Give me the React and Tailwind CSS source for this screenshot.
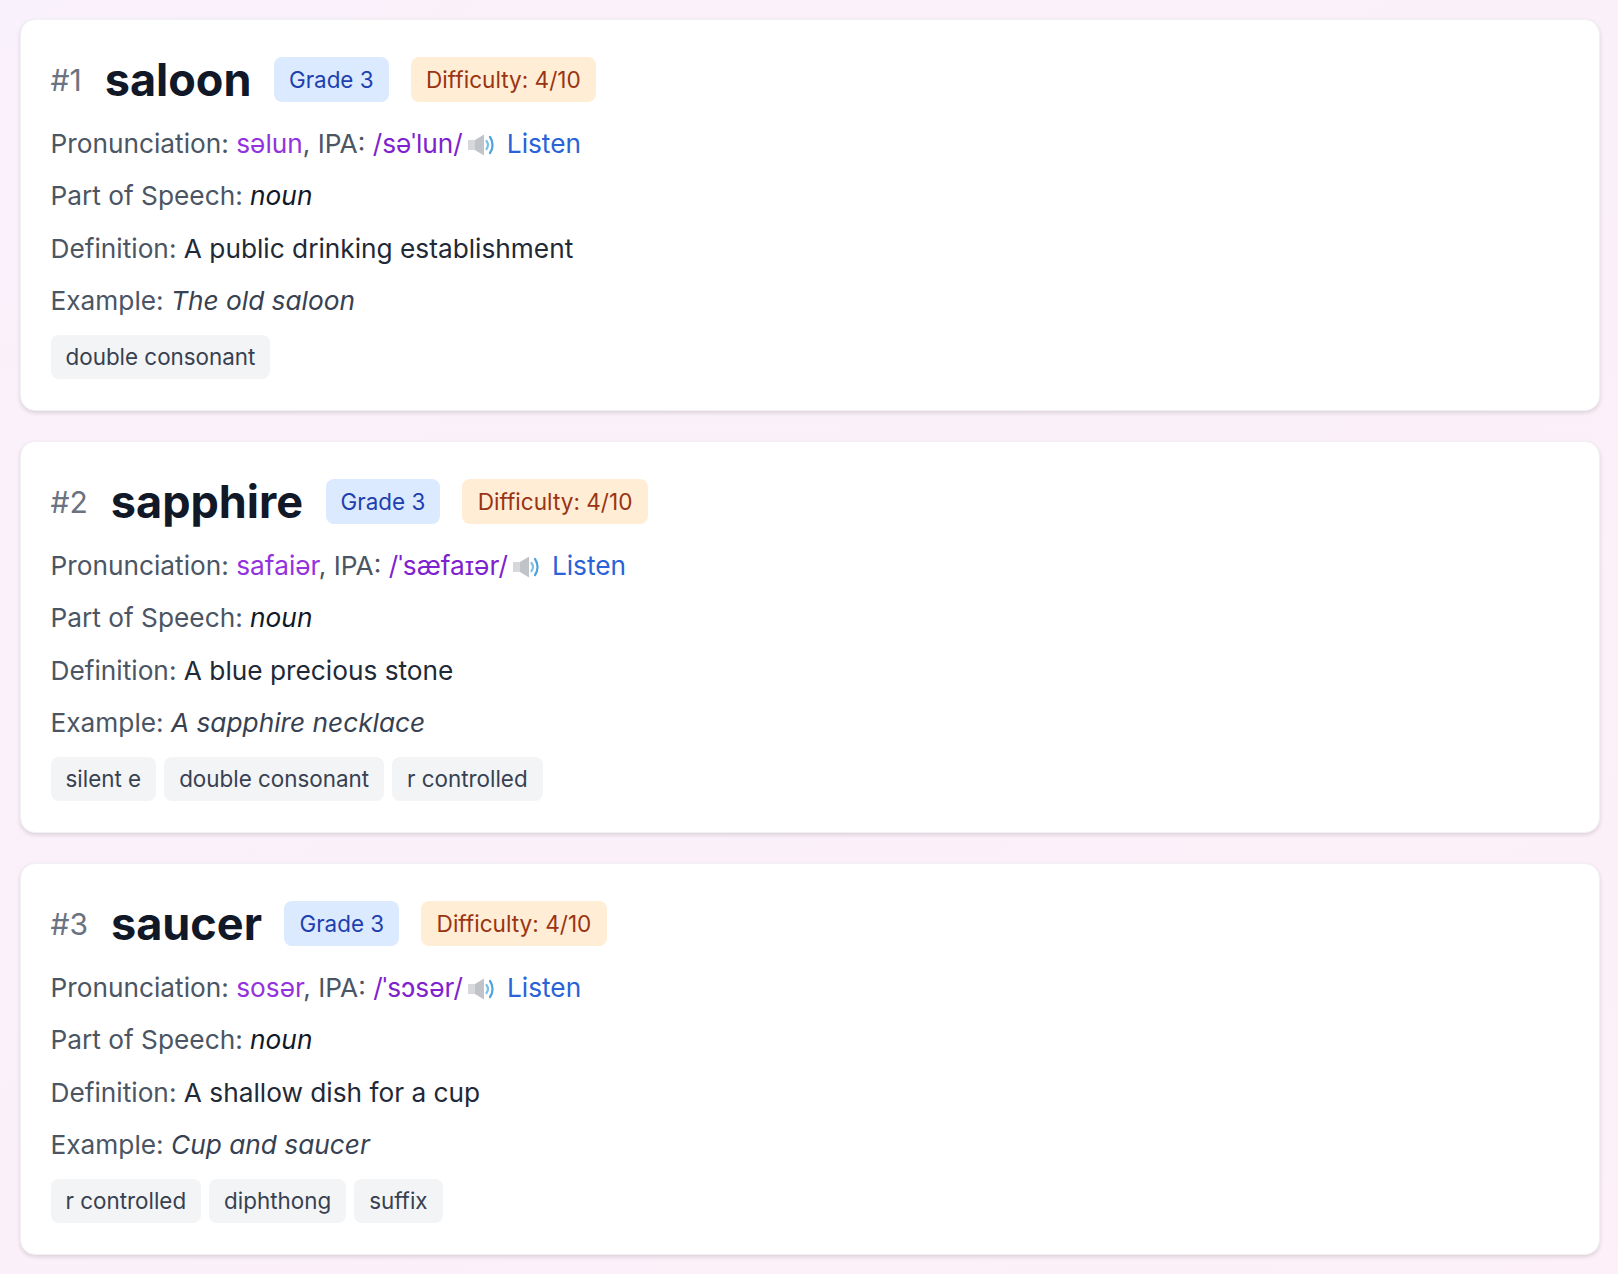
import React from "react";

const words = [
  {
    num: 1,
    word: "saloon",
    say: "səlun",
    ipa: "/səˈlun/",
    def: "A public drinking establishment",
    example: "The old saloon",
    tags: ["double consonant"],
  },
  {
    num: 2,
    word: "sapphire",
    say: "safaiər",
    ipa: "/ˈsæfaɪər/",
    def: "A blue precious stone",
    example: "A sapphire necklace",
    tags: ["silent e", "double consonant", "r controlled"],
  },
  {
    num: 3,
    word: "saucer",
    say: "sosər",
    ipa: "/ˈsɔsər/",
    def: "A shallow dish for a cup",
    example: "Cup and saucer",
    tags: ["r controlled", "diphthong", "suffix"],
  },
];

const Speaker = () => (
  <svg width="26" height="22" viewBox="0 0 26 22" className="inline-block align-[-3px] ml-[5px] mr-[13px]">
    <path d="M0 6h7v10H0z" fill="#d6d8dc" />
    <path d="M7 6 16 .5v21L7 16z" fill="#c0c3c8" />
    <path d="M18.5 7c1.8 2.4 1.8 5.6 0 8" fill="none" stroke="#7cc0ea" strokeWidth="2.2" strokeLinecap="round" />
    <path d="M22 3c3.4 4.8 3.4 11.2 0 16" fill="none" stroke="#4fa3dc" strokeWidth="2.2" strokeLinecap="round" />
  </svg>
);

const WordCard = ({ item }) => (
  <div className="bg-white rounded-[15px] border border-[#f1f0f3] shadow-[0_2px_4px_rgba(0,0,0,0.13)] px-[29.5px] pt-[37px] pb-[30px] h-[392px]">
    <div className="flex items-center h-[45px]">
      <span className="text-[30px] leading-none text-[#6b7280] mr-[23px]">#{item.num}</span>
      <h2 className="text-[45px] leading-none font-bold text-[#111827] mr-[22.5px]">{item.word}</h2>
      <span className="bg-[#dbeafe] text-[#1e40af] text-[22.4px] leading-[25px] px-[15px] py-[10px] rounded-lg mr-[22px]">Grade 3</span>
      <span className="bg-[#ffedd5] text-[#9a3412] text-[22.6px] leading-[25px] px-[15.5px] py-[10px] rounded-lg">Difficulty: 4/10</span>
    </div>
    <div className="mt-[24.5px] text-[#4b5563] text-[26.25px] leading-[34px]">
      <p className="mb-[18.5px]">
        Pronunciation: <span className="text-[#9333dd]">{item.say}</span>, IPA:{" "}
        <span className="text-[#7e22ce]">{item.ipa}</span>
        <Speaker />
        <span className="text-[#2a62d8]">Listen</span>
      </p>
      <p className="mb-[18.5px]">
        Part of Speech: <em className="text-[#111827]">noun</em>
      </p>
      <p className="mb-[18.5px]">
        Definition: <span className="text-[#1f2937]">{item.def}</span>
      </p>
      <p>
        Example: <em className="text-[#374151]">{item.example}</em>
      </p>
    </div>
    <div className="flex gap-[8px] mt-[16.5px]">
      {item.tags.map((tag) => (
        <span key={tag} className="bg-[#f3f4f6] text-[#374151] text-[22.4px] leading-[28px] px-[15px] py-[8px] rounded-lg">
          {tag}
        </span>
      ))}
    </div>
  </div>
);

export default function App() {
  return (
    <div className="min-h-[1274px] bg-gradient-to-br from-[#f9f1fb] to-[#fdf0f8] pl-[20px] pr-[18px] pt-[19px] flex flex-col gap-[30px] font-['Inter',sans-serif]">
      {words.map((item) => (
        <WordCard key={item.num} item={item} />
      ))}
    </div>
  );
}
